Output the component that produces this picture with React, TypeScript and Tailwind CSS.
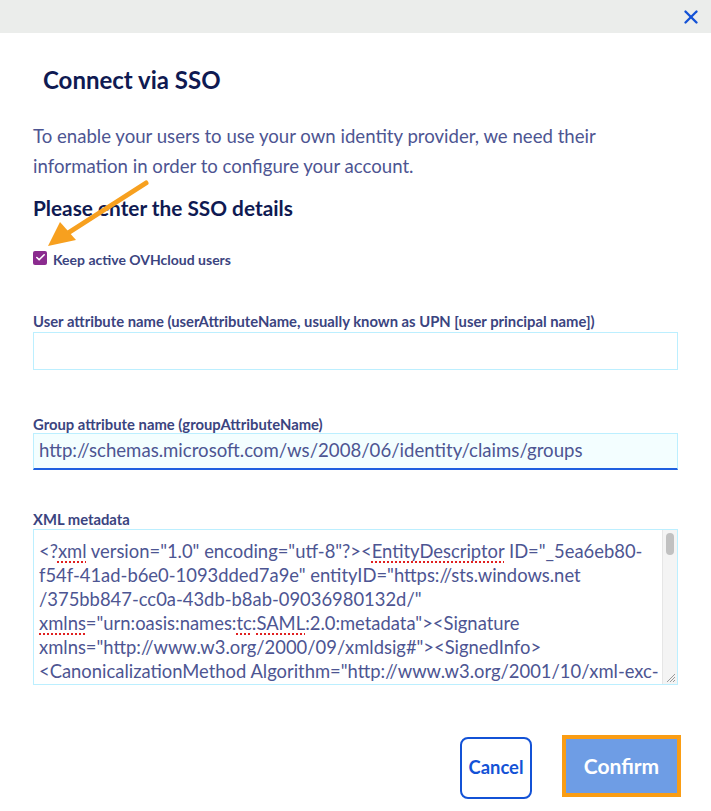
import { X, Check } from 'lucide-react';

const font = { fontFamily: 'Lato, "Noto Sans", sans-serif' };

function Misspelled({ children }: { children: string }) {
  return (
    <span className="underline decoration-dotted decoration-[#e02020] decoration-2 underline-offset-[3px]">
      {children}
    </span>
  );
}

export default function App() {
  return (
    <div className="relative w-[711px] h-[811px] bg-white overflow-hidden" style={font}>
      {/* Header */}
      <div className="h-[33px] bg-[#ebedeb] flex items-center justify-end pr-[9px]">
        <X size={22} strokeWidth={2.6} className="text-[#1352d6]" />
      </div>

      <div className="px-[33px]">
        <h1 className="ml-[10px] mt-[32px] text-[24px] leading-[30px] font-bold text-[#0f1a52]">Connect via SSO</h1>

        <p className="mt-[26px] text-[18.6px] leading-[30px] text-[#4d5592]">
          To enable your users to use your own identity provider, we need their
          <br />
          information in order to configure your account.
        </p>

        <h2 className="mt-[14px] text-[20.8px] leading-[26px] font-bold text-[#0f1a52]">Please enter the SSO details</h2>

        <label className="mt-[25px] flex items-center gap-[6px]">
          <span className="w-[14px] h-[14px] rounded-[2px] bg-[#8b2b8f] flex items-center justify-center">
            <Check size={11} strokeWidth={3.5} className="text-white" />
          </span>
          <span className="mt-[5px] text-[14px] leading-[18px] font-bold text-[#3b4480]">Keep active OVHcloud users</span>
        </label>

        <div className="mt-[43px]">
          <div className="text-[14.8px] leading-[18px] font-bold text-[#3b4480]">
            User attribute name (userAttributeName, usually known as UPN [user principal name])
          </div>
          <div className="mt-[2px] h-[38px] border border-[#bcefff] bg-white" />
        </div>

        <div className="mt-[45px]">
          <div className="text-[14.8px] leading-[18px] font-bold text-[#3b4480]">
            Group attribute name (groupAttributeName)
          </div>
          <div className="h-[37px] border border-[#bcefff] border-b-2 border-b-[#1f5fe0] bg-[#f3feff] flex items-center px-[5px] text-[18.6px] text-[#4d5592]">
            http://schemas.microsoft.com/ws/2008/06/identity/claims/groups
          </div>
        </div>

        <div className="mt-[40px]">
          <div className="text-[14.8px] leading-[18px] font-bold text-[#3b4480]">XML metadata</div>
          <div className="mt-[1px] h-[156px] border border-[#bcefff] bg-white flex">
            <div className="flex-1 overflow-hidden pl-[5px] pt-[9px] text-[18.4px] leading-[24px] text-[#4d5592] whitespace-nowrap">
              <div>
                &lt;?<Misspelled>xml</Misspelled> version="1.0" encoding="utf-8"?&gt;&lt;<Misspelled>EntityDescriptor</Misspelled> ID="_5ea6eb80-
              </div>
              <div>f54f-41ad-b6e0-1093dded7a9e" entityID="https://sts.windows.net</div>
              <div>/375bb847-cc0a-43db-b8ab-09036980132d/"</div>
              <div>
                <Misspelled>xmlns</Misspelled>="urn:oasis:names:<Misspelled>tc</Misspelled>:<Misspelled>SAML</Misspelled>:2.0:metadata"&gt;&lt;Signature
              </div>
              <div>xmlns="http://www.w3.org/2000/09/xmldsig#"&gt;&lt;SignedInfo&gt;</div>
              <div>&lt;CanonicalizationMethod Algorithm="http://www.w3.org/2001/10/xml-exc-</div>
            </div>
            <div className="relative w-[15px] bg-[#f4f4f4] border-l border-[#e6e6e6]">
              <div className="mx-auto mt-[3px] w-[8px] h-[22px] rounded-full bg-[#c1c1c1]" />
              <svg className="absolute bottom-[1px] right-[1px]" width="11" height="11" viewBox="0 0 11 11">
                <path d="M10 2 L2 10 M10 5 L5 10 M10 8 L8 10" stroke="#9a9a9a" strokeWidth="1" />
              </svg>
            </div>
          </div>
        </div>

        <div className="mt-[50px] -mr-[3px] flex justify-end items-start gap-[30px]">
          <button className="mt-[2px] h-[62px] w-[72px] rounded-[8px] border-2 border-[#1352d6] text-[18.4px] font-bold text-[#1352d6] bg-white">
            Cancel
          </button>
          <button className="h-[62px] w-[119px] border-[4px] border-[#fa9d14] bg-[#6e9de5] text-[21px] font-bold text-white">
            Confirm
          </button>
        </div>
      </div>

      {/* Annotation arrow */}
      <svg className="absolute left-0 top-0 pointer-events-none" width="711" height="811">
        <line x1="146" y1="183" x2="68" y2="233" stroke="#f7a01f" strokeWidth="5" strokeLinecap="round" />
        <polygon points="48,246 60,222 76,240" fill="#f7a01f" />
      </svg>
    </div>
  );
}
